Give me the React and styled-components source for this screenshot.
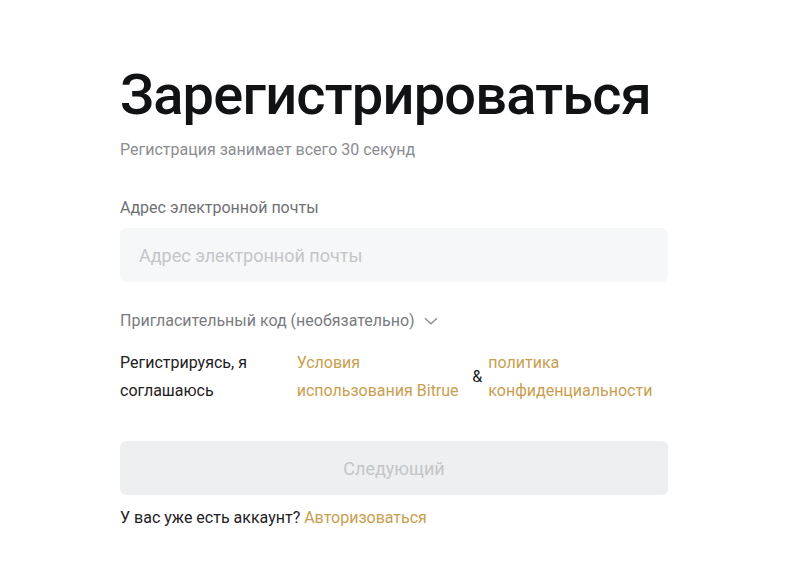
import React from "react";
import styled, { createGlobalStyle } from "styled-components";

const GlobalStyle = createGlobalStyle`
  body {
    margin: 0;
    background: #ffffff;
    font-family: Roboto, "Noto Sans", sans-serif;
  }
`;

const Page = styled.div`
  padding: 62px 0 0 120px;
  width: 548px;
`;

const Title = styled.h1`
  margin: 0;
  font-size: 56px;
  line-height: 67px;
  font-weight: 500;
  letter-spacing: -0.8px;
  color: #111214;
`;

const Subtitle = styled.p`
  margin: 11px 0 0;
  font-size: 16px;
  line-height: 20px;
  color: #8b8d91;
`;

const Label = styled.div`
  margin-top: 38px;
  font-size: 16px;
  line-height: 20px;
  color: #6f7175;
`;

const Input = styled.input`
  box-sizing: border-box;
  display: block;
  width: 100%;
  height: 54px;
  margin-top: 10px;
  padding: 0 19px;
  border: none;
  border-radius: 6px;
  background: #f6f7f8;
  font-family: inherit;
  font-size: 18px;
  color: #111214;
  outline: none;

  &::placeholder {
    color: #c3c5c9;
  }
`;

const Toggle = styled.button`
  display: flex;
  align-items: center;
  gap: 9px;
  margin-top: 29px;
  padding: 0;
  border: none;
  background: none;
  font-family: inherit;
  font-size: 16px;
  line-height: 20px;
  color: #7a7c80;
  cursor: pointer;
`;

const Terms = styled.div`
  display: flex;
  align-items: center;
  margin-top: 18px;
  font-size: 16px;
  line-height: 28px;
`;

const TermsCol = styled.div`
  width: ${(p) => p.$w}px;
  color: ${(p) => (p.$gold ? "#c99e50" : "#1e2023")};
`;

const Amp = styled.span`
  width: 16px;
  color: #1e2023;
  font-size: 16px;
`;

const Submit = styled.button`
  display: block;
  width: 100%;
  height: 54px;
  margin-top: 36px;
  border: none;
  border-radius: 6px;
  background: #eeeff1;
  font-family: inherit;
  font-size: 18px;
  color: #c3c5c9;
`;

const Footer = styled.div`
  margin-top: 13px;
  font-size: 16px;
  line-height: 20px;
  color: #1e2023;
`;

const Link = styled.a`
  color: #c99e50;
  text-decoration: none;
`;

const Chevron = () => (
  <svg width="14" height="8" viewBox="0 0 14 8" fill="none">
    <path d="M1 1.2l6 5.6 6-5.6" stroke="#8a8c90" strokeWidth="1.3" />
  </svg>
);

export default function App() {
  return (
    <Page>
      <GlobalStyle />
      <Title>Зарегистрироваться</Title>
      <Subtitle>Регистрация занимает всего 30 секунд</Subtitle>
      <Label>Адрес электронной почты</Label>
      <Input placeholder="Адрес электронной почты" />
      <Toggle>
        Пригласительный код (необязательно) <Chevron />
      </Toggle>
      <Terms>
        <TermsCol $w={177}>
          Регистрируясь, я
          <br />
          соглашаюсь
        </TermsCol>
        <TermsCol $w={176} $gold>
          Условия
          <br />
          использования Bitrue
        </TermsCol>
        <Amp>&amp;</Amp>
        <TermsCol $w={180} $gold>
          политика
          <br />
          конфиденциальности
        </TermsCol>
      </Terms>
      <Submit>Следующий</Submit>
      <Footer>
        У вас уже есть аккаунт? <Link href="#">Авторизоваться</Link>
      </Footer>
    </Page>
  );
}
